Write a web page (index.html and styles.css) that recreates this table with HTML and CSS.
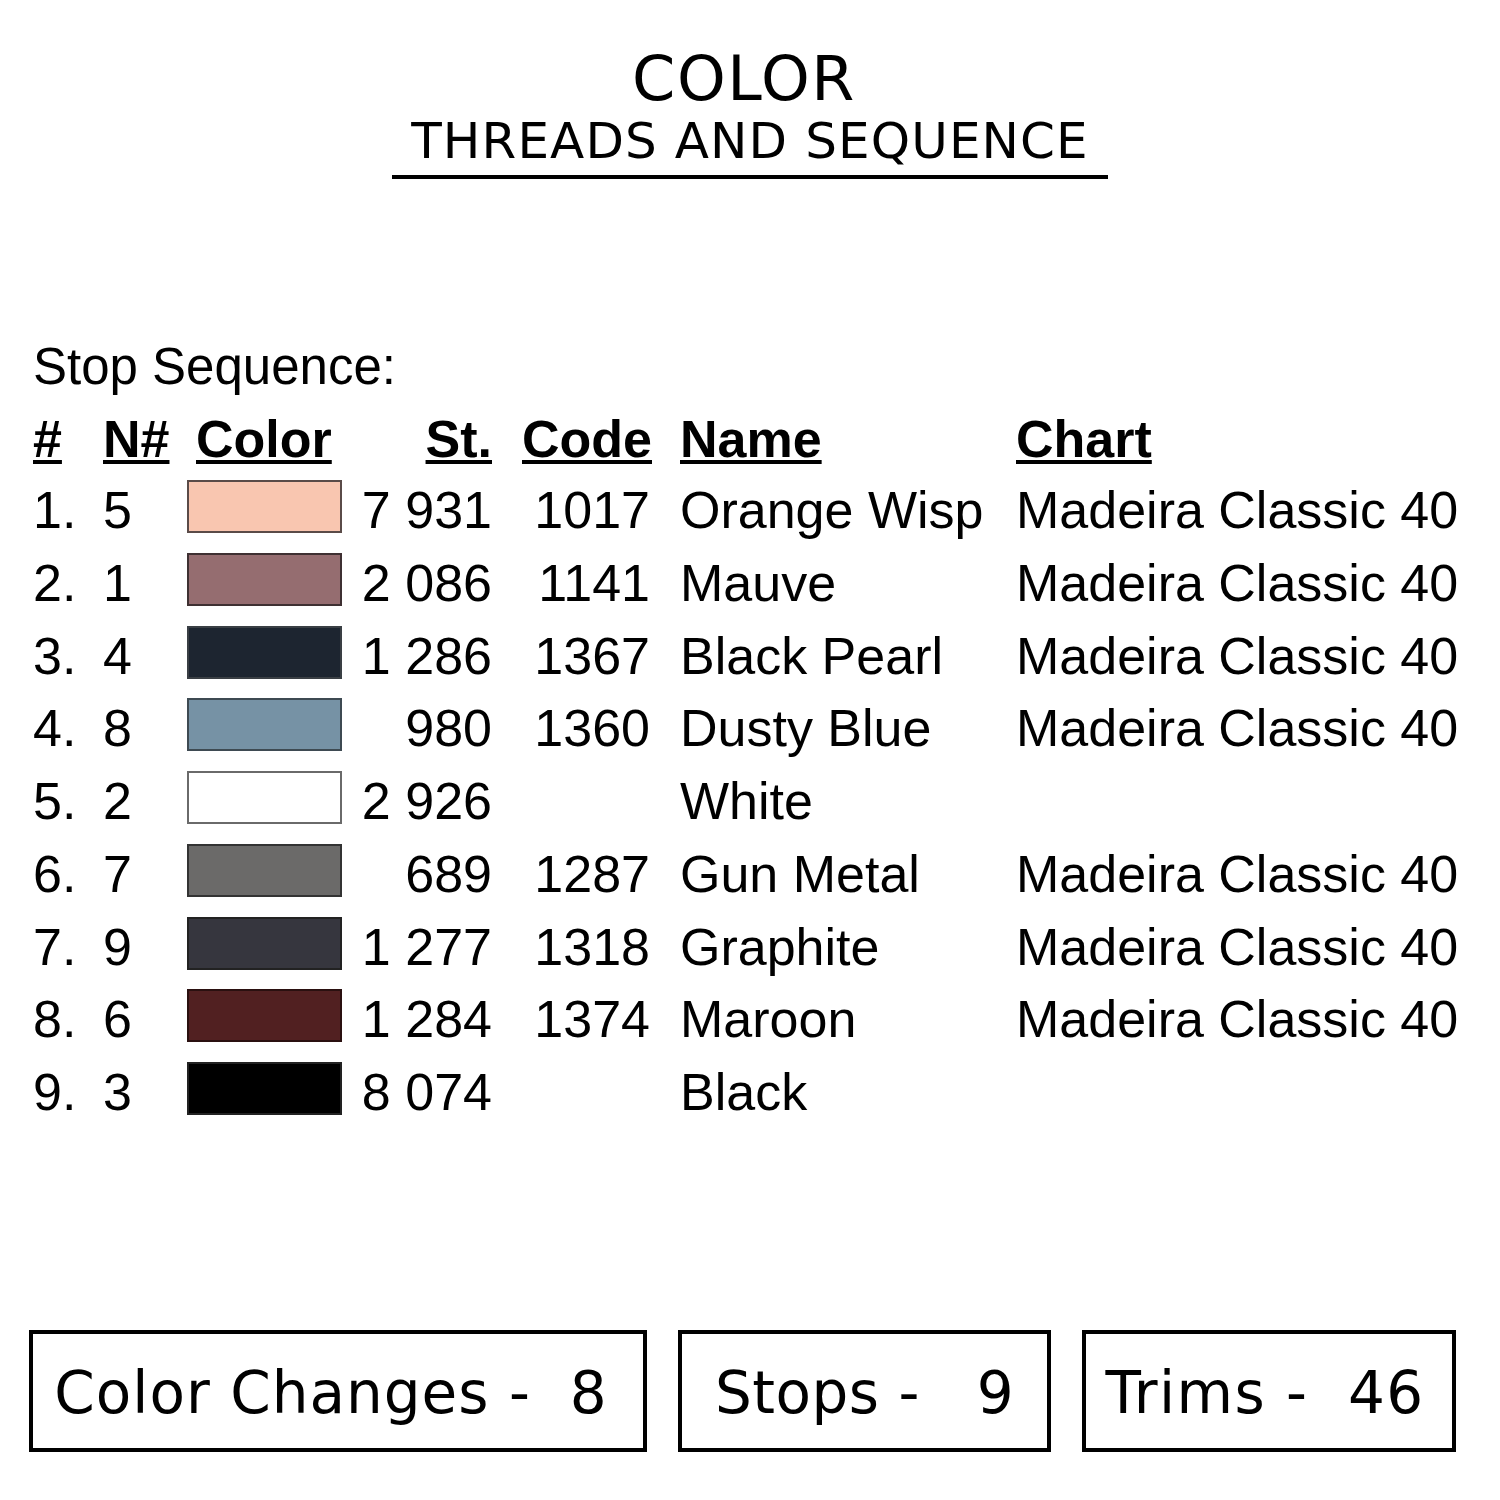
FILE: index.html
```html
<!DOCTYPE html>
<html lang="en">
<head>
<meta charset="utf-8">
<title>Color Threads and Sequence</title>
<link rel="stylesheet" href="styles.css">
</head>
<body>
<header class="title">
  <div class="title-main">COLOR</div>
  <div class="title-sub">THREADS AND SEQUENCE</div>
</header>

<section class="seq">
  <div class="seq-title">Stop Sequence:</div>
  <div class="row head">
    <span class="c-num"><u>#</u></span>
    <span class="c-n"><u>N#</u></span>
    <span class="c-color"><u>Color</u></span>
    <span class="c-st"><u>St.</u></span>
    <span class="c-code"><u>Code</u></span>
    <span class="c-name"><u>Name</u></span>
    <span class="c-chart"><u>Chart</u></span>
  </div>
  <div class="row">
    <span class="c-num">1.</span><span class="c-n">5</span>
    <span class="c-color"><i class="sw sw-orange"></i></span>
    <span class="c-st">7 931</span><span class="c-code">1017</span>
    <span class="c-name">Orange Wisp</span><span class="c-chart">Madeira Classic 40</span>
  </div>
  <div class="row">
    <span class="c-num">2.</span><span class="c-n">1</span>
    <span class="c-color"><i class="sw sw-mauve"></i></span>
    <span class="c-st">2 086</span><span class="c-code">1141</span>
    <span class="c-name">Mauve</span><span class="c-chart">Madeira Classic 40</span>
  </div>
  <div class="row">
    <span class="c-num">3.</span><span class="c-n">4</span>
    <span class="c-color"><i class="sw sw-pearl"></i></span>
    <span class="c-st">1 286</span><span class="c-code">1367</span>
    <span class="c-name">Black Pearl</span><span class="c-chart">Madeira Classic 40</span>
  </div>
  <div class="row">
    <span class="c-num">4.</span><span class="c-n">8</span>
    <span class="c-color"><i class="sw sw-dusty"></i></span>
    <span class="c-st">980</span><span class="c-code">1360</span>
    <span class="c-name">Dusty Blue</span><span class="c-chart">Madeira Classic 40</span>
  </div>
  <div class="row">
    <span class="c-num">5.</span><span class="c-n">2</span>
    <span class="c-color"><i class="sw sw-white"></i></span>
    <span class="c-st">2 926</span><span class="c-code"></span>
    <span class="c-name">White</span><span class="c-chart"></span>
  </div>
  <div class="row">
    <span class="c-num">6.</span><span class="c-n">7</span>
    <span class="c-color"><i class="sw sw-gun"></i></span>
    <span class="c-st">689</span><span class="c-code">1287</span>
    <span class="c-name">Gun Metal</span><span class="c-chart">Madeira Classic 40</span>
  </div>
  <div class="row">
    <span class="c-num">7.</span><span class="c-n">9</span>
    <span class="c-color"><i class="sw sw-graphite"></i></span>
    <span class="c-st">1 277</span><span class="c-code">1318</span>
    <span class="c-name">Graphite</span><span class="c-chart">Madeira Classic 40</span>
  </div>
  <div class="row">
    <span class="c-num">8.</span><span class="c-n">6</span>
    <span class="c-color"><i class="sw sw-maroon"></i></span>
    <span class="c-st">1 284</span><span class="c-code">1374</span>
    <span class="c-name">Maroon</span><span class="c-chart">Madeira Classic 40</span>
  </div>
  <div class="row">
    <span class="c-num">9.</span><span class="c-n">3</span>
    <span class="c-color"><i class="sw sw-black"></i></span>
    <span class="c-st">8 074</span><span class="c-code"></span>
    <span class="c-name">Black</span><span class="c-chart"></span>
  </div>
</section>

<footer class="stats">
  <div class="stat stat-cc">Color Changes -  8</div>
  <div class="stat stat-st">Stops -   9</div>
  <div class="stat stat-tr">Trims -  46</div>
</footer>
</body>
</html>
```

FILE: styles.css
```css
html, body {
  margin: 0;
  padding: 0;
  background: #ffffff;
  color: #000000;
}

body {
  width: 1500px;
  height: 1500px;
  overflow: hidden;
}

.title {
  display: flex;
  flex-direction: column;
  align-items: center;
  padding-top: 47px;
  font-family: "DejaVu Sans", "Open Sans", sans-serif;
}

.title-main {
  font-size: 62px;
  line-height: 63px;
  font-weight: 400;
  letter-spacing: 1.5px;
  margin-left: -12px;
}

.title-sub {
  margin-top: 1px;
  font-size: 50px;
  line-height: 60px;
  font-weight: 400;
  letter-spacing: 1.1px;
  padding: 0 19px 4px 19px;
  border-bottom: 4px solid #000;
}

.seq {
  padding-left: 33px;
  margin-top: 150px;
  font-family: "Liberation Sans", Arial, sans-serif;
  font-size: 52px;
}

.seq-title {
  font-size: 51px;
  line-height: 75px;
}

.row {
  display: grid;
  grid-template-columns: 70px 84px 155px 150px 158px 366px auto;
  height: 72.75px;
  line-height: 72.75px;
  white-space: nowrap;
}

.row.head {
  height: 70px;
  line-height: 70px;
  font-weight: bold;
}

.row.head u {
  text-decoration: underline;
  text-decoration-thickness: 4px;
  text-underline-offset: 3px;
}

.c-st, .c-code {
  text-align: right;
}

.head .c-code {
  margin-right: -2px;
}

.head .c-color {
  padding-left: 9px;
}

.c-name {
  padding-left: 30px;
}

.c-color {
  display: flex;
  align-items: flex-start;
}

.sw {
  display: block;
  box-sizing: border-box;
  width: 155px;
  height: 53px;
  margin-top: 6px;
  border: 2px solid #4a4242;
}

.sw-orange { background: #f9c6b0; border-color: #5a4b48; }
.sw-mauve { background: #956d70; border-color: #3e3032; }
.sw-pearl { background: #1d2530; border-color: #3a3f44; }
.sw-dusty { background: #7692a5; border-color: #3e4a52; }
.sw-white { background: #ffffff; border-color: #6a6a6a; }
.sw-gun { background: #6b6a69; border-color: #333; }
.sw-graphite { background: #36363e; border-color: #222; }
.sw-maroon { background: #512021; border-color: #2a1010; }
.sw-black { background: #000000; border-color: #222; }

.stats {
  display: flex;
  gap: 31px;
  padding-left: 29px;
  margin-top: 201px;
  font-family: "DejaVu Sans", "Open Sans", sans-serif;
  font-size: 58px;
}

.stat {
  box-sizing: border-box;
  height: 122px;
  border: 4px solid #000;
  display: flex;
  align-items: center;
  justify-content: center;
  white-space: pre;
  padding-top: 4px;
}

.stat-cc { width: 618px; padding-right: 14px; letter-spacing: 1px; }
.stat-st { width: 373px; letter-spacing: 0.5px; }
.stat-tr { width: 374px; padding-right: 8px; letter-spacing: 1.4px; }
```
